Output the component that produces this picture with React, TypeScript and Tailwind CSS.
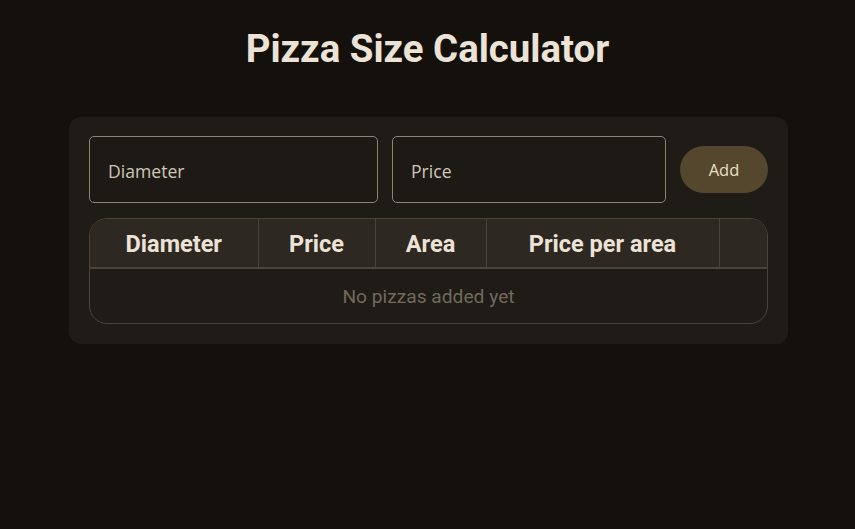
import { useState } from "react";

type Pizza = { diameter: number; price: number };

export default function App() {
  const [diameter, setDiameter] = useState("");
  const [price, setPrice] = useState("");
  const [pizzas, setPizzas] = useState<Pizza[]>([]);

  function addPizza() {
    const d = parseFloat(diameter);
    const p = parseFloat(price);
    if (!d || !p) return;
    setPizzas([...pizzas, { diameter: d, price: p }]);
    setDiameter("");
    setPrice("");
  }

  return (
    <div className="min-h-[529px] bg-[#14110d] font-['Roboto',sans-serif] text-[#ece3d6]">
      <h1 className="pt-[27px] text-center text-[38.4px] leading-[44px] font-bold">Pizza Size Calculator</h1>

      <div className="mt-[46px] ml-[69px] w-[719px] rounded-xl bg-[#1f1b16] px-5 pt-[19px] pb-5">
        <div className="flex items-center gap-[14px]">
          <input
            value={diameter}
            onChange={(e) => setDiameter(e.target.value)}
            placeholder="Diameter"
            className="h-[67px] w-[289px] shrink-0 rounded-[5px] border border-[#8a8475] bg-[#1d1914] px-[18px] pt-[2px] font-['Open_Sans',sans-serif] text-[17.6px] text-[#d8d0c2] outline-none placeholder:text-[#cfc7b8]"
          />
          <input
            value={price}
            onChange={(e) => setPrice(e.target.value)}
            placeholder="Price"
            className="h-[67px] w-[274px] shrink-0 rounded-[5px] border border-[#8a8475] bg-[#1d1914] px-[18px] pt-[2px] font-['Open_Sans',sans-serif] text-[17.6px] text-[#d8d0c2] outline-none placeholder:text-[#cfc7b8]"
          />
          <button
            onClick={addPizza}
            className="h-[47px] w-[88px] shrink-0 rounded-full bg-[#54472d] pt-[2px] font-['Open_Sans',sans-serif] text-[16.5px] text-[#ece0c8]"
          >
            Add
          </button>
        </div>

        <div className="mt-[15px] overflow-hidden rounded-[18px] border border-[#4a4337]">
          <table className="w-full border-collapse">
            <thead>
              <tr className="h-[49px] border-b-2 border-[#4a4337] bg-[#2d2821] text-[23.5px] font-bold">
                <th className="w-[168px] border-r border-[#4a4337] pt-[3px]">Diameter</th>
                <th className="w-[117px] border-r border-[#4a4337] pt-[3px]">Price</th>
                <th className="w-[111px] border-r border-[#4a4337] pt-[3px]">Area</th>
                <th className="w-[233px] border-r border-[#4a4337] pt-[3px]">Price per area</th>
                <th></th>
              </tr>
            </thead>
            <tbody>
              {pizzas.length === 0 ? (
                <tr className="h-[55px]">
                  <td colSpan={5} className="pt-[2px] text-center text-[19.2px] text-[#716a5d]">
                    No pizzas added yet
                  </td>
                </tr>
              ) : (
                pizzas.map((p, i) => {
                  const area = Math.PI * (p.diameter / 2) ** 2;
                  return (
                    <tr key={i} className="h-[45px] text-center text-[18px]">
                      <td>{p.diameter}</td>
                      <td>{p.price}</td>
                      <td>{area.toFixed(1)}</td>
                      <td>{(p.price / area).toFixed(3)}</td>
                      <td>
                        <button onClick={() => setPizzas(pizzas.filter((_, j) => j !== i))}>×</button>
                      </td>
                    </tr>
                  );
                })
              )}
            </tbody>
          </table>
        </div>
      </div>
    </div>
  );
}
